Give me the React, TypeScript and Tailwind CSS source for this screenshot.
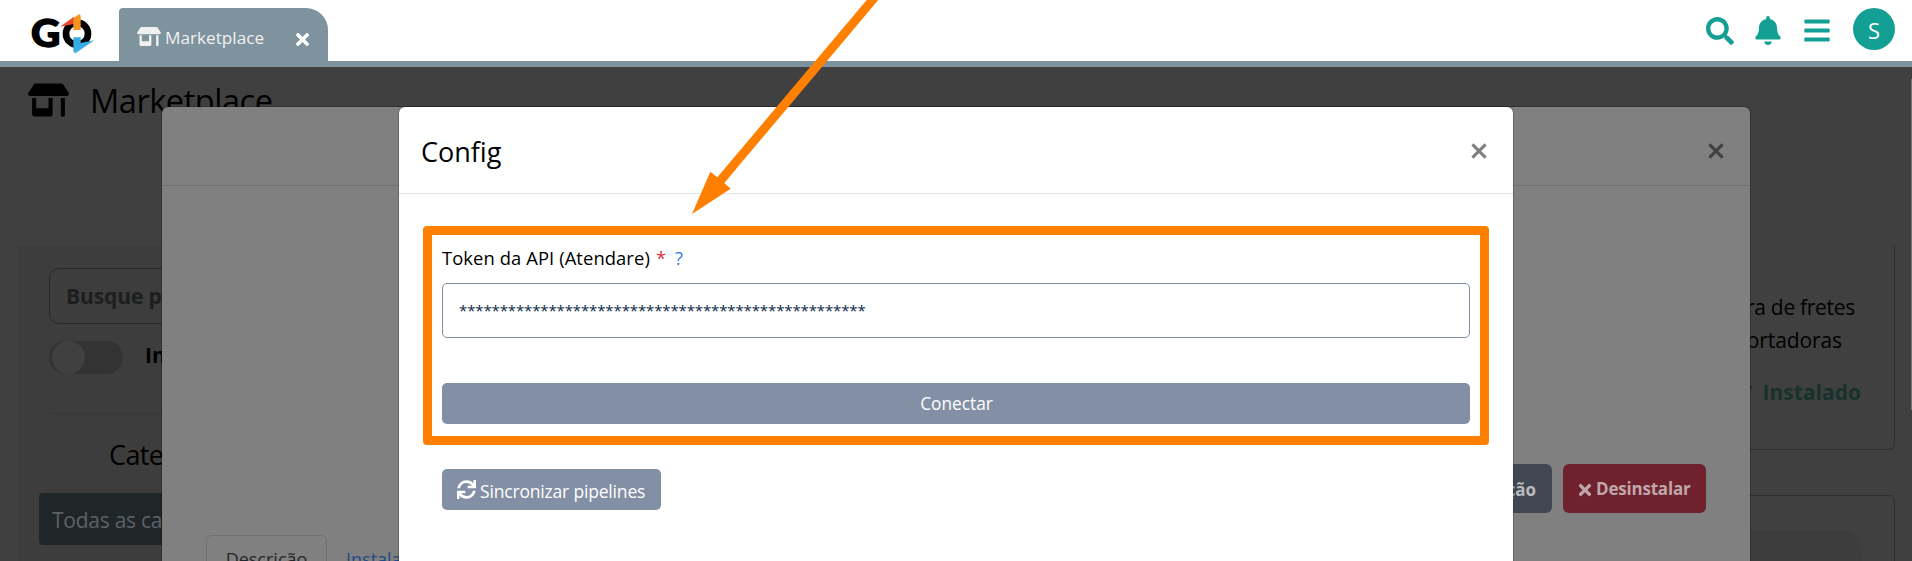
import type { ReactNode } from "react";
import { FaBars, FaBell, FaCheck, FaSearch, FaStoreAlt, FaSync, FaTimes } from "react-icons/fa";

function Logo() {
  return (
    <svg className="ml-[30px] h-[46px] w-[66px] overflow-visible" viewBox="90 36 198 138">
      <text x="93" y="142" fontFamily="Lato" fontWeight="900" fontSize="113" fill="#000" stroke="#000" strokeWidth="4" textLength="88" lengthAdjust="spacingAndGlyphs">G</text>
      <circle cx="231" cy="101" r="33" fill="none" stroke="#000" strokeWidth="20" />
      <path d="M180 80 222 50v22z" fill="#e8452c" />
      <path d="M220 54 237 43q5 0 5 5v42h-22z" fill="#f7941e" />
      <path d="M220 112h22v17l41-8-56 38q-7 0-7-7z" fill="#35aee6" />
    </svg>
  );
}

function TopBar() {
  return (
    <header className="flex h-[67px] shrink-0 items-start justify-between border-b-6 border-[#7e939e] bg-white">
      <div className="flex h-[61px]">
        <div className="w-[119px] pt-3">
          <Logo />
        </div>
        <div className="mt-2 flex h-[53px] w-[209px] items-center rounded-tl rounded-tr-[22px] bg-[#7e939e] pl-[18px] text-[17.2px] text-[#f0f0f0]">
          <FaStoreAlt className="mt-1 h-[19px] w-[24px]" />
          <span className="ml-1 mt-[6px] leading-6">Marketplace</span>
          <FaTimes className="ml-[29px] mt-[10px] size-[19px] text-white" />
        </div>
      </div>
      <div className="flex h-[58px] items-center pr-[17px] text-[#149f94]">
        <FaSearch className="mt-[3px] size-7" />
        <FaBell className="ml-[21px] mt-[3px] h-[29px] w-[26px]" />
        <FaBars className="ml-[23px] mt-[3px] h-[29px] w-[26px]" />
        <div className="ml-[23px] flex size-[42px] items-center justify-center rounded-full bg-[#149f94] pt-[2px] text-[22px] text-white">S</div>
      </div>
    </header>
  );
}

function FilterPanel() {
  return (
    <aside className="mt-[112px] h-[315px] w-[400px] bg-[#3d3d3d] pt-[22px]">
      <div className="ml-8 flex h-[56px] items-center rounded-[10px] border border-[#24282d] pl-4 pt-[2px] text-[21px] font-bold text-[#1c1e20]">
        <span className="tracking-[-0.1px]">Busque por nome</span>
      </div>
      <div className="ml-8 mt-[17px] flex h-[33px]">
        <div className="h-[33px] w-[74px] rounded-full bg-[#333] pl-[3px]">
          <div className="size-[33px] rounded-full bg-[#404040]" />
        </div>
        <span className="ml-[22px] text-[21px] font-bold leading-7 text-black">Instalados</span>
      </div>
      <div className="ml-8 mt-[39px] border-t border-[#373737]" />
      <h2 className="ml-[92px] mt-[23px] text-[27px] leading-9 tracking-[-0.6px] text-black">Categorias</h2>
      <div className="ml-[22px] mt-[20px] flex h-[52px] items-center rounded bg-[#1f2628] pl-[13px] pt-[3px] text-[21px] tracking-[-0.25px] text-[#5c6265]">
        Todas as categorias
      </div>
    </aside>
  );
}

function Listing() {
  return (
    <section className="w-[400px] pt-[179px]">
      <div className="flex h-[204px] flex-col items-end rounded-b-md border-x border-b border-[#2f2f2f] pr-[33px] pt-[44px] text-[21px] leading-[33px] text-black">
        <p className="mr-[6px] mt-px tracking-[-0.3px]">Calculadora de fretes</p>
        <p className="mr-[19px] tracking-[-0.1px]">com transportadoras</p>
        <p className="mt-[19px] flex items-center font-bold text-[#17312b]">
          <FaCheck className="mr-[11px] size-[22px]" />
          Instalado
        </p>
      </div>
      <div className="mt-[45px] h-[160px] rounded-md border border-[#2f2f2f] pl-8 pr-[33px] pt-[34px]">
        <div className="h-[120px] rounded-[20px] bg-[#3d3d3d]" />
      </div>
    </section>
  );
}

function Page() {
  return (
    <main className="flex h-[494px] justify-between bg-[#404040] px-[17px]">
      <div className="flex flex-col">
        <div className="flex h-[67px] items-center pl-[11px] text-black">
          <FaStoreAlt className="mb-[2px] h-[34px] w-[41px]" />
          <h1 className="ml-[21px] text-[32.5px] leading-[44px] tracking-[-0.45px]">Marketplace</h1>
        </div>
        <FilterPanel />
      </div>
      <Listing />
    </main>
  );
}

function Window({ className, children }: { className: string; children: ReactNode }) {
  return <div className={`absolute top-[106px] h-[470px] rounded-t-[7px] border border-black/20 bg-clip-padding ${className}`}>{children}</div>;
}

function CloseMark({ className }: { className: string }) {
  return (
    <svg viewBox="0 0 16 16" className={`size-4 ${className}`} fill="none" stroke="currentColor" strokeWidth="3">
      <path d="M1.4 1.4 14.6 14.6M14.6 1.4 1.4 14.6" />
    </svg>
  );
}

function DetailWindow() {
  return (
    <Window className="left-[161px] w-[1590px] bg-[#808080]">
      <div className="flex h-[79px] justify-end border-b border-[#6f7173] pr-[26px] pt-9">
        <CloseMark className="text-[#404040]" />
      </div>
      <div className="flex justify-end pr-11 pt-[278px] text-[17px] font-bold leading-[51px] text-[#b9bbbd]">
        <div className="h-[49px] w-[170px] rounded-md bg-[#414853] pr-4 text-right">Configuração</div>
        <div className="ml-[11px] flex h-[49px] w-[143px] items-center rounded-md bg-[#6f222d] pl-[13px] text-[#c0a6aa]">
          <FaTimes className="mt-[2px] size-[18px]" />
          <span className="ml-[2px] tracking-[-0.2px]">Desinstalar</span>
        </div>
      </div>
      <div className="flex pl-11 pt-[22px] text-[18px] leading-[47px]">
        <div className="h-[50px] w-[121px] rounded-t-md border border-[#6f7173] text-center text-[#25282c]">Descrição</div>
        <div className="ml-[19px] pt-px text-[#234b86]">Instalação</div>
      </div>
    </Window>
  );
}

function ConfigWindow() {
  return (
    <Window className="left-[398px] w-[1116px] bg-white">
      <div className="flex h-[87px] justify-between border-b border-[#dee2e6] pl-[22px] pr-[26px] text-black">
        <h2 className="mt-[27px] text-[27px] leading-9">Config</h2>
        <CloseMark className="mt-9 text-[#7f7f7f]" />
      </div>
      <div className="ml-6 mt-8 h-[219px] w-[1066px] rounded bg-[#ff8000] p-[9px]">
        <div className="h-full bg-white px-[10px] pt-[11px]">
          <p className="flex text-[18.4px] leading-6 text-black">
            <span className="tracking-[0.08px]">Token da API (Atendare)</span>
            <span className="ml-[6px] text-[#dc3545]">*</span>
            <span className="ml-[9px] text-[#3b7ddd]">?</span>
          </p>
          <div className="mt-[13px] h-[55px] rounded-[5px] border border-[#828fa5] pl-4 pt-px text-[15px] leading-[51px] tracking-[-0.13px] text-[#0b2a45]">
            **************************************************
          </div>
          <button className="mt-[45px] block h-[41px] w-full rounded-[5px] bg-[#828fa5] pl-px text-[17.3px] leading-[41px] text-white">Conectar</button>
        </div>
      </div>
      <button className="ml-[43px] mt-6 flex h-[41px] w-[219px] items-center rounded-[5px] bg-[#828fa5] pl-[15px] text-[17.5px] text-white">
        <FaSync className="size-[19px]" />
        <span className="ml-[4px] mt-[2px] whitespace-nowrap leading-6 tracking-[-0.18px]">Sincronizar pipelines</span>
      </button>
    </Window>
  );
}

export default function App() {
  return (
    <div className="relative flex h-[561px] w-full flex-col overflow-hidden bg-[#404040] font-['Open_Sans',sans-serif]">
      <TopBar />
      <Page />
      <DetailWindow />
      <ConfigWindow />
      <div className="absolute right-0 top-[79px] h-[331px] w-px bg-[#77757a]" />
      <svg className="pointer-events-none absolute left-0 top-0 h-[240px] w-[1000px]" viewBox="0 0 1000 240" fill="#ff8000">
        <path d="M868 -1.5H879.5L724.3 183 730.7 188.8 692 214 710.3 171.7 717.3 177.3Z" />
      </svg>
    </div>
  );
}
